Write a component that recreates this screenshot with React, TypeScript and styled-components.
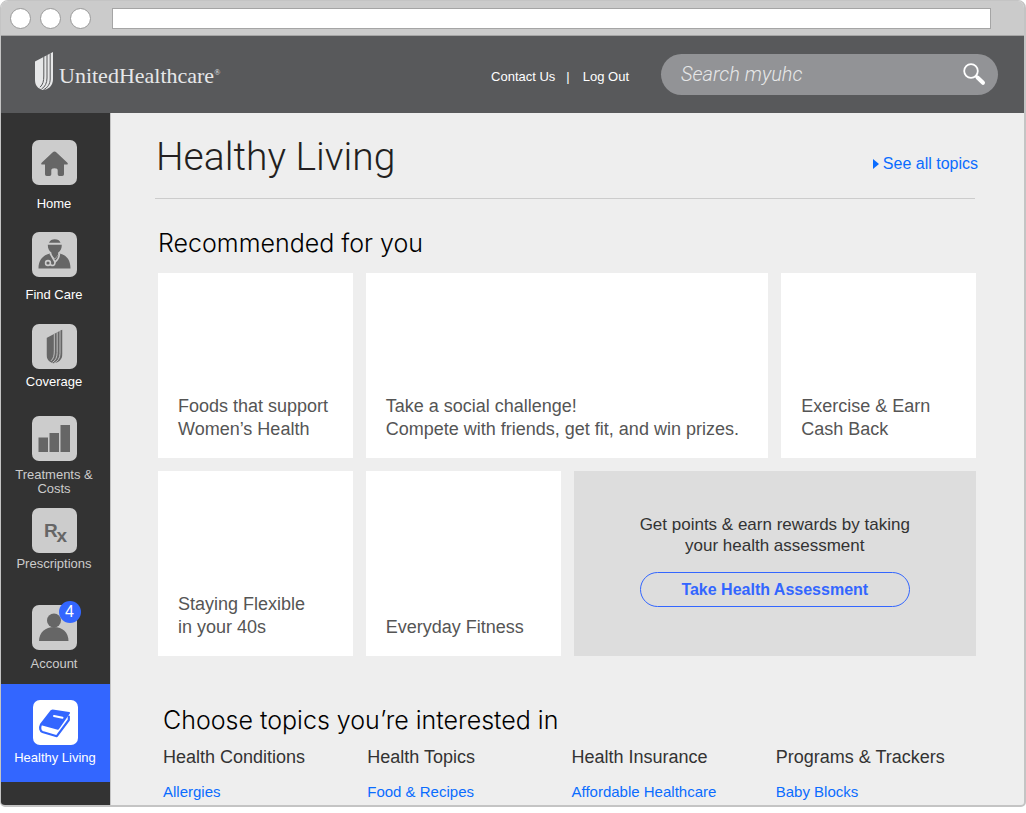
import React from "react";
import styled, { createGlobalStyle } from "styled-components";

const sans = '"Liberation Sans", Arial, sans-serif';
const light = 'Inter, "Liberation Sans", sans-serif';
const slim = 'Roboto, "Liberation Sans", sans-serif';

const GlobalStyle = createGlobalStyle`
  *, *::before, *::after { box-sizing: border-box; }
  body { margin: 0; background: #fff; font-family: ${sans}; color: #555; }
  h1, h2, h3, p, ul { margin: 0; padding: 0; font-weight: 400; }
  ul { list-style: none; }
  a { text-decoration: none; color: inherit; }
`;

const Browser = styled.div`
  border: solid #c4c4c4;
  border-width: 1px 2px 2px 1px;
  border-radius: 8px 8px 5px 5px;
  overflow: hidden;
  background: #eee;
`;

const TitleBar = styled.div`
  display: flex;
  align-items: center;
  gap: 9px;
  height: 35px;
  padding: 0 33px 0 9px;
  background: #cbcbcb;
  border-bottom: 1px solid #a5a5a5;
`;

const WindowDot = styled.span`
  flex: none;
  width: 21px;
  height: 21px;
  border: 1px solid #999;
  border-radius: 50%;
  background: #fff;
`;

const AddressBar = styled.input`
  flex: 1;
  min-width: 0;
  height: 21px;
  margin-left: 12px;
  padding: 0 6px;
  border: 1px solid #a5a5a5;
  border-radius: 0;
  background: #fff;
  font: 13px ${sans};
`;

const Header = styled.header`
  display: flex;
  align-items: center;
  height: 77px;
  padding: 0 26px 0 34px;
  background: #58595b;
`;

const Brand = styled.a`
  display: flex;
  align-items: center;
  gap: 6px;
  margin-right: auto;
  padding-bottom: 7px;
  color: #e6e7e8;
`;

const BrandName = styled.span`
  padding-top: 10px;
  font: 22px/26px "Liberation Serif", serif;
  sup { font-size: 8px; line-height: 8px; vertical-align: 8px; }
`;

const UserLinks = styled.nav`
  display: flex;
  gap: 11px;
  margin-right: 32px;
  padding-top: 5px;
  color: #fff;
  font-size: 13px;
  line-height: 16px;
  a:last-child { padding-left: 2px; }
`;

const SearchBox = styled.form`
  display: flex;
  align-items: center;
  width: 337px;
  height: 41px;
  padding: 0 12px 2px 20px;
  border-radius: 21px;
  background: #929396;
`;

const SearchInput = styled.input`
  flex: 1;
  min-width: 0;
  padding: 0;
  border: 0;
  outline: 0;
  background: transparent;
  color: #fff;
  font: italic 300 20px/26px ${slim};
  &::placeholder { color: #e6e7e8; opacity: 1; }
`;

const SearchButton = styled.button`
  display: flex;
  padding: 0;
  border: 0;
  background: none;
`;

const Body = styled.div`
  display: flex;
`;

const Sidebar = styled.nav`
  flex: none;
  width: 110px;
  padding-top: 27px;
  background: #333;
  border-right: 1px solid #c4c4c4;
`;

const NavItem = styled.li<{ $height: number; $active?: boolean }>`
  height: ${(p) => p.$height}px;
  padding: ${(p) => (p.$active ? "16px 1px 0 0" : "0 3px 0 0")};
  background: ${(p) => (p.$active ? "#3366ff" : "transparent")};
`;

const NavLink = styled.a<{ $gap: number; $dim?: boolean }>`
  display: flex;
  flex-direction: column;
  align-items: center;
  gap: ${(p) => p.$gap}px;
  color: ${(p) => (p.$dim ? "#ccc" : "#fff")};
  font-size: 13px;
  line-height: 14px;
  text-align: center;
`;

const Tile = styled.span<{ $active?: boolean }>`
  position: relative;
  display: flex;
  width: 45px;
  height: 45px;
  border-radius: 7px;
  background: ${(p) => (p.$active ? "#fff" : "#ccc")};
  color: ${(p) => (p.$active ? "#3366ff" : "#666")};
`;

const Badge = styled.span`
  position: absolute;
  top: -4px;
  right: -4px;
  width: 22px;
  height: 22px;
  border-radius: 50%;
  background: #3366ff;
  color: #fff;
  font-size: 16px;
  line-height: 22px;
`;

const Main = styled.main`
  flex: 1;
  min-width: 0;
  padding: 20px 46px 0 44px;
`;

const PageHead = styled.div`
  display: flex;
  align-items: center;
  justify-content: space-between;
  height: 48px;
`;

const PageTitle = styled.h1`
  padding-left: 1px;
  color: #231f20;
  font: 300 39px/48px ${slim};
`;

const AllTopics = styled.a`
  display: flex;
  align-items: center;
  gap: 4px;
  padding-top: 13px;
  color: #0a6cff;
  font-size: 16px;
  line-height: 18px;
`;

const Rule = styled.hr`
  margin: 17px 3px 0 0;
  border: 0;
  border-top: 1px solid #ccc;
`;

const SectionTitle = styled.h2`
  color: #000;
  font: 300 25px/32px ${light};
`;

const Recommended = styled.section`
  padding: 28px 2px 0 3px;
`;

const CardGrid = styled.div`
  display: grid;
  grid-template-columns: repeat(4, 1fr);
  grid-auto-rows: 185px;
  gap: 13px;
  margin-top: 14px;
`;

const Card = styled.a<{ $wide?: boolean }>`
  display: flex;
  align-items: flex-end;
  grid-column: span ${(p) => (p.$wide ? 2 : 1)};
  padding: 0 12px 17px 20px;
  background: #fff;
  color: #555;
  font-size: 18px;
  line-height: 23px;
`;

const Promo = styled.div`
  display: flex;
  flex-direction: column;
  align-items: center;
  grid-column: span 2;
  padding-top: 43px;
  background: #ddd;
  color: #333;
  font-size: 17px;
  line-height: 21px;
  text-align: center;
`;

const PromoButton = styled.button`
  width: 270px;
  height: 35px;
  margin-top: 16px;
  border: 1px solid #3366ff;
  border-radius: 18px;
  background: transparent;
  color: #3366ff;
  font: bold 16px/20px ${sans};
`;

const Topics = styled.section`
  padding: 48px 0 3px 8px;
`;

const TopicGrid = styled.div`
  display: grid;
  grid-template-columns: repeat(4, 1fr);
  margin: 10px -2px 0 0;
`;

const TopicTitle = styled.h3`
  color: #333;
  font-size: 18px;
  line-height: 22px;
`;

const TopicLink = styled.a`
  display: block;
  margin-top: 14px;
  color: #0a6cff;
  font-size: 15px;
  line-height: 20px;
`;

function Shield({ width, height, gap }: { width: number; height: number; gap: string }) {
  return (
    <svg width={width} height={height} viewBox="0 0 18 38" aria-hidden="true">
      <path d="M0 9.500 18 0v27c0 7-5 11-10.500 11C3 36.500 0 33.500 0 28Z" fill="currentColor" />
      <g fill="none" stroke={gap} strokeWidth="1">
        <path d="M8.800 4.500V24c0 5-.8 8.500-3.800 11.200" />
        <path d="M12 3v23c0 5-2 9-5.500 11" />
        <path d="M15.200 1.300V27c0 5-2.700 8.800-6.700 10.800" />
      </g>
    </svg>
  );
}

function HomeIcon() {
  return (
    <svg width="45" height="45" viewBox="0 0 45 45" fill="currentColor">
      <path d="M22.500 11.500c.7 0 1.200.3 1.700.8l11.200 10.400c.8.9.4 1.800-.6 1.800H32V34c0 1.300-.6 2-1.800 2h-2.700c-1.200 0-1.800-.7-1.800-2v-3.500c0-1.500-.8-2.300-3.200-2.300s-3.200.8-3.200 2.300V34c0 1.300-.6 2-1.800 2h-2.700C13.600 36 13 35.300 13 34v-9.500h-2.800c-1 0-1.400-.9-.6-1.800l11.200-10.400c.5-.5 1-.8 1.700-.8Z" />
    </svg>
  );
}

function DoctorIcon() {
  return (
    <svg width="45" height="45" viewBox="0 0 45 45">
      <g fill="currentColor">
        <path d="M17 10.700c1-2.400 3-3.500 5.800-3.500s4.800 1.100 5.800 3.500Z" />
        <path d="M15.800 12.700h14c0 4-1.300 6.300-3.600 7.900v2.200l-3.400 4-3.400-4v-2.200c-2.300-1.600-3.600-3.900-3.600-7.900Z" />
        <path d="M6.500 36.500c0-8.500 4.500-13.500 11.500-15l4.800 6 4.800-6c7 1.500 10.900 6.500 10.900 15Z" />
      </g>
      <g fill="none" stroke="#ccc" strokeWidth="1.600">
        <path d="M18.200 21.500 23 30c2-1.500 4.200-4 4.400-8.500" />
        <path d="M23 29.500c0 2.500-.7 4-2.300 4-1.300 0-1.600-.6-2.600-1" />
        <circle cx="16" cy="31" r="2.400" />
      </g>
    </svg>
  );
}

function CoverageIcon() {
  return (
    <svg width="45" height="45" viewBox="0 0 45 45">
      <svg x="14.500" y="5.500" width="16" height="34" viewBox="0 0 18 38">
        <Shield width={18} height={38} gap="#ccc" />
      </svg>
    </svg>
  );
}

function ChartIcon() {
  return (
    <svg width="45" height="45" viewBox="0 0 45 45" fill="currentColor">
      <path d="M6.500 21.500H16v14.500H6.500ZM17.500 17H27v19h-9.500ZM28.500 9H38v27h-9.500Z" />
    </svg>
  );
}

function RxIcon() {
  return (
    <svg width="45" height="45" viewBox="0 0 45 45" fill="currentColor" fontFamily="Liberation Sans" fontWeight="bold" fontSize="19">
      <text x="12" y="29">R</text>
      <text x="24.500" y="34">x</text>
    </svg>
  );
}

function PersonIcon() {
  return (
    <svg width="45" height="45" viewBox="0 0 45 45" fill="currentColor">
      <circle cx="22" cy="15.500" r="7" />
      <path d="M7 36c0-8.500 6.500-14 15-14s14.500 5.500 14.500 14Z" />
    </svg>
  );
}

function BookIcon() {
  return (
    <svg width="45" height="45" viewBox="0 0 45 45">
      <path d="M19.500 10.500 36 13 25 28.800 9.500 24.500Z" fill="currentColor" stroke="currentColor" strokeWidth="2" strokeLinejoin="round" />
      <path d="M18.500 11 8 24.500c-1.700 3.500-.7 6.800 1.500 7.500l14.300 4.200L35.800 20v-3.500" fill="none" stroke="currentColor" strokeWidth="2.200" strokeLinejoin="round" strokeLinecap="round" />
      <path d="M21 16 29.500 17.800" stroke="#fff" strokeWidth="2" strokeLinecap="round" />
    </svg>
  );
}

type Entry = { label: React.ReactNode; icon: React.ReactNode; height: number; gap: number; dim?: boolean; active?: boolean; badge?: number };

const entries: Entry[] = [
  { label: "Home", icon: <HomeIcon />, height: 92, gap: 12 },
  { label: "Find Care", icon: <DoctorIcon />, height: 92, gap: 11 },
  { label: "Coverage", icon: <CoverageIcon />, height: 92, gap: 6 },
  { label: <>Treatments &amp;<br />Costs</>, icon: <ChartIcon />, height: 92, gap: 7, dim: true },
  { label: "Prescriptions", icon: <RxIcon />, height: 97, gap: 4, dim: true },
  { label: "Account", icon: <PersonIcon />, height: 79, gap: 7, dim: true, badge: 4 },
  { label: "Healthy Living", icon: <BookIcon />, height: 98, gap: 6, active: true },
];

const topics = [
  ["Health Conditions", "Allergies"],
  ["Health Topics", "Food & Recipes"],
  ["Health Insurance", "Affordable Healthcare"],
  ["Programs & Trackers", "Baby Blocks"],
];

export default function App() {
  return (
    <>
      <GlobalStyle />
      <Browser>
        <TitleBar>
          <WindowDot />
          <WindowDot />
          <WindowDot />
          <AddressBar type="text" aria-label="Address" />
        </TitleBar>
        <Header>
          <Brand href="#">
            <Shield width={18} height={38} gap="#58595b" />
            <BrandName>UnitedHealthcare<sup>®</sup></BrandName>
          </Brand>
          <UserLinks>
            <a href="#">Contact Us</a>
            <span>|</span>
            <a href="#">Log Out</a>
          </UserLinks>
          <SearchBox onSubmit={(e) => e.preventDefault()}>
            <SearchInput type="text" placeholder="Search myuhc" aria-label="Search myuhc" />
            <SearchButton type="submit" aria-label="Search">
              <svg width="24" height="24" viewBox="0 0 24 24" fill="none" stroke="#fff">
                <circle cx="9" cy="9" r="6.800" strokeWidth="1.800" />
                <path d="m13.500 13.500 2 2" strokeWidth="2.500" />
                <path d="m15.500 15.500 5.500 5.300" strokeWidth="4" strokeLinecap="round" />
              </svg>
            </SearchButton>
          </SearchBox>
        </Header>
        <Body>
          <Sidebar>
            <ul>
              {entries.map((item, i) => (
                <NavItem key={i} $height={item.height} $active={item.active}>
                  <NavLink href="#" $gap={item.gap} $dim={item.dim}>
                    <Tile $active={item.active}>
                      {item.icon}
                      {item.badge && <Badge>{item.badge}</Badge>}
                    </Tile>
                    <span>{item.label}</span>
                  </NavLink>
                </NavItem>
              ))}
            </ul>
          </Sidebar>
          <Main>
            <PageHead>
              <PageTitle>Healthy Living</PageTitle>
              <AllTopics href="#">
                <svg width="6" height="10" viewBox="0 0 6 10" fill="currentColor"><path d="M0 0 6 5 0 10Z" /></svg>
                See all topics
              </AllTopics>
            </PageHead>
            <Rule />
            <Recommended>
              <SectionTitle>Recommended for you</SectionTitle>
              <CardGrid>
                <Card href="#">Foods that support<br />Women’s Health</Card>
                <Card href="#" $wide>Take a social challenge!<br />Compete with friends, get fit, and win prizes.</Card>
                <Card href="#">Exercise &amp; Earn<br />Cash Back</Card>
                <Card href="#">Staying Flexible<br />in your 40s</Card>
                <Card href="#">Everyday Fitness</Card>
                <Promo>
                  <p>Get points &amp; earn rewards by taking<br />your health assessment</p>
                  <PromoButton type="button">Take Health Assessment</PromoButton>
                </Promo>
              </CardGrid>
            </Recommended>
            <Topics>
              <SectionTitle>Choose topics you’re interested in</SectionTitle>
              <TopicGrid>
                {topics.map(([title, link]) => (
                  <div key={title}>
                    <TopicTitle>{title}</TopicTitle>
                    <TopicLink href="#">{link}</TopicLink>
                  </div>
                ))}
              </TopicGrid>
            </Topics>
          </Main>
        </Body>
      </Browser>
    </>
  );
}
